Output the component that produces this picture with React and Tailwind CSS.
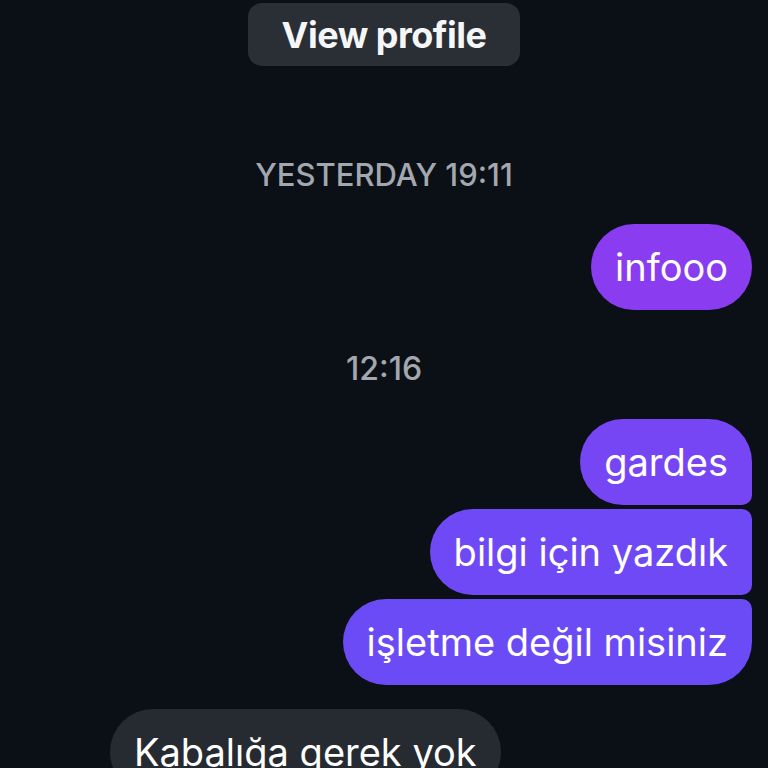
export default function App() {
    const font = { fontFamily: "Inter, 'Noto Sans', sans-serif" };

    return (
        <div
            className="w-[768px] h-[768px] overflow-hidden bg-[#0b0f16] text-white"
            style={font}
        >
            {/* View profile */}
            <div className="flex justify-center pt-[3px]">
                <div className="w-[272px] h-[63px] rounded-[14px] bg-[#2a2e35] flex items-center justify-center text-[36px] font-bold tracking-[-0.5px] text-[#f5f6f8]">
                    View profile
                </div>
            </div>

            {/* Timestamp */}
            <div className="mt-[92px] text-center text-[31px] font-medium text-[#a3a7ae] leading-[34px]">
                YESTERDAY 19:11
            </div>

            <div className="mt-[32px] flex justify-end pr-4">
                <div className="h-[86px] px-6 rounded-[43px] bg-[#8a3cf1] flex items-center text-[38px] leading-none">
                    infooo
                </div>
            </div>

            <div className="mt-[42px] text-center text-[32px] font-medium text-[#a3a7ae] leading-[34px]">
                12:16
            </div>

            {/* Sent group */}
            <div className="mt-[33px] flex flex-col items-end gap-1 pr-4">
                <div className="h-[86px] px-6 rounded-l-[43px] rounded-tr-[43px] rounded-br-[10px] bg-[#7646f5] flex items-center text-[38px] leading-none">
                    gardes
                </div>
                <div className="h-[86px] px-6 rounded-l-[43px] rounded-r-[10px] bg-[#6e49f5] flex items-center text-[38px] leading-none">
                    bilgi için yazdık
                </div>
                <div className="h-[86px] px-6 rounded-l-[43px] rounded-tr-[10px] rounded-br-[43px] bg-[#6a4bf5] flex items-center text-[38px] leading-none">
                    işletme değil misiniz
                </div>
            </div>

            {/* Received */}
            <div className="mt-[24px] pl-[110px]">
                <div className="inline-flex h-[86px] px-6 rounded-[43px] bg-[#262a31] items-center text-[38px] leading-none">
                    Kabalığa gerek yok
                </div>
            </div>
        </div>
    );
}
